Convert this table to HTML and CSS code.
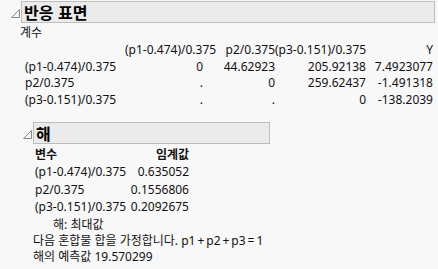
FILE: index.html
```html
<!DOCTYPE html>
<html lang="ko">
<head>
<meta charset="utf-8">
<link rel="stylesheet" href="styles.css">
</head>
<body>
<div class="outline top">
  <div class="ohead">
    <span class="tri"><svg width="9" height="9" viewBox="0 0 9 9"><path d="M8.5 0.5 L8.5 8.5 L0.5 8.5 Z" fill="none" stroke="#8a8a8a" stroke-width="1"/></svg></span>
    <div class="obox"><span class="otitle">반응 표면</span></div>
  </div>
  <div class="obody">
    <div class="caption">계수</div>
    <div class="coef">
      <div class="c lab"></div><div class="c num">(p1-0.474)/0.375</div><div class="c num">p2/0.375</div><div class="c num">(p3-0.151)/0.375</div><div class="c num">Y</div>
      <div class="c lab">(p1-0.474)/0.375</div><div class="c num">0</div><div class="c num">44.62923</div><div class="c num">205.92138</div><div class="c num">7.4923077</div>
      <div class="c lab">p2/0.375</div><div class="c num">.</div><div class="c num">0</div><div class="c num">259.62437</div><div class="c num">-1.491318</div>
      <div class="c lab">(p3-0.151)/0.375</div><div class="c num">.</div><div class="c num">.</div><div class="c num">0</div><div class="c num">-138.2039</div>
    </div>

    <div class="outline sub">
      <div class="ohead">
        <span class="tri"><svg width="9" height="9" viewBox="0 0 9 9"><path d="M8.5 0.5 L8.5 8.5 L0.5 8.5 Z" fill="none" stroke="#8a8a8a" stroke-width="1"/></svg></span>
        <div class="obox box2"><span class="otitle">해</span></div>
      </div>
      <div class="obody2">
        <div class="sol">
          <div class="h">변수</div><div class="h num">임계값</div>
          <div class="r">(p1-0.474)/0.375</div><div class="r num">0.635052</div>
          <div class="r">p2/0.375</div><div class="r num">0.1556806</div>
          <div class="r">(p3-0.151)/0.375</div><div class="r num">0.2092675</div>
        </div>
        <div class="note">해: 최대값</div>
      </div>
      <div class="lines">
        <div class="l1">다음 혼합물 합을 가정합니다. p1&#8201;+&#8201;p2&#8201;+&#8201;p3&#8201;=&#8201;1</div>
        <div class="l2">해의 예측값 19.570299</div>
      </div>
    </div>
  </div>
</div>
</body>
</html>
```
FILE: styles.css
```css
html, body {
  margin: 0;
  padding: 0;
  background: #f8f8f8;
}
body {
  font-family: "Noto Sans", "Noto Sans CJK KR", sans-serif;
  font-size: 12px;
  color: #111;
  width: 438px;
  height: 269px;
  overflow: hidden;
}
.top {
  padding: 1px 3px 0 11px;
}
.ohead {
  display: flex;
  align-items: center;
}
.tri {
  display: flex;
  width: 10px;
  height: 9px;
  margin-top: 2px;
}
.obox {
  flex: 1;
  height: 20px;
  background: #ebebeb;
  border: 1px solid #bdbdbd;
  display: flex;
  align-items: center;
  padding-left: 2px;
}
.otitle {
  font-family: "Noto Sans CJK KR", sans-serif;
  font-weight: bold;
  font-size: 16px;
  line-height: 20px;
  color: #000;
}
.obody {
  padding-left: 9px;
}
.caption {
  line-height: 16px;
  margin-top: 1px;
  font-family: "Noto Sans CJK KR", sans-serif;
}
.coef {
  display: grid;
  grid-template-columns: 100px 78px 72px 91px 67px;
  margin-left: 5px;
  margin-top: 2px;
  line-height: 16.5px;
}
.c.num, .num {
  text-align: right;
  white-space: nowrap;
}
.lab {
  white-space: nowrap;
}
.sub {
  margin-top: 14px;
  padding-left: 3px;
  width: 258px;
}
.box2 {
  flex: none;
  width: 233px;
}
.obody2 {
  padding-left: 12px;
}
.sol {
  display: grid;
  grid-template-columns: 95px 59px;
  width: 154px;
  margin-top: 1px;
}
.h {
  font-weight: bold;
  font-family: "Noto Sans CJK KR", sans-serif;
  line-height: 17px;
  margin-bottom: 1px;
}
.r {
  line-height: 17.5px;
}
.note {
  padding-left: 18px;
  line-height: 17px;
}
.lines {
  padding-left: 10px;
  white-space: nowrap;
}
.l1 {
  line-height: 15px;
}
.l2 {
  line-height: 18px;
}
```
